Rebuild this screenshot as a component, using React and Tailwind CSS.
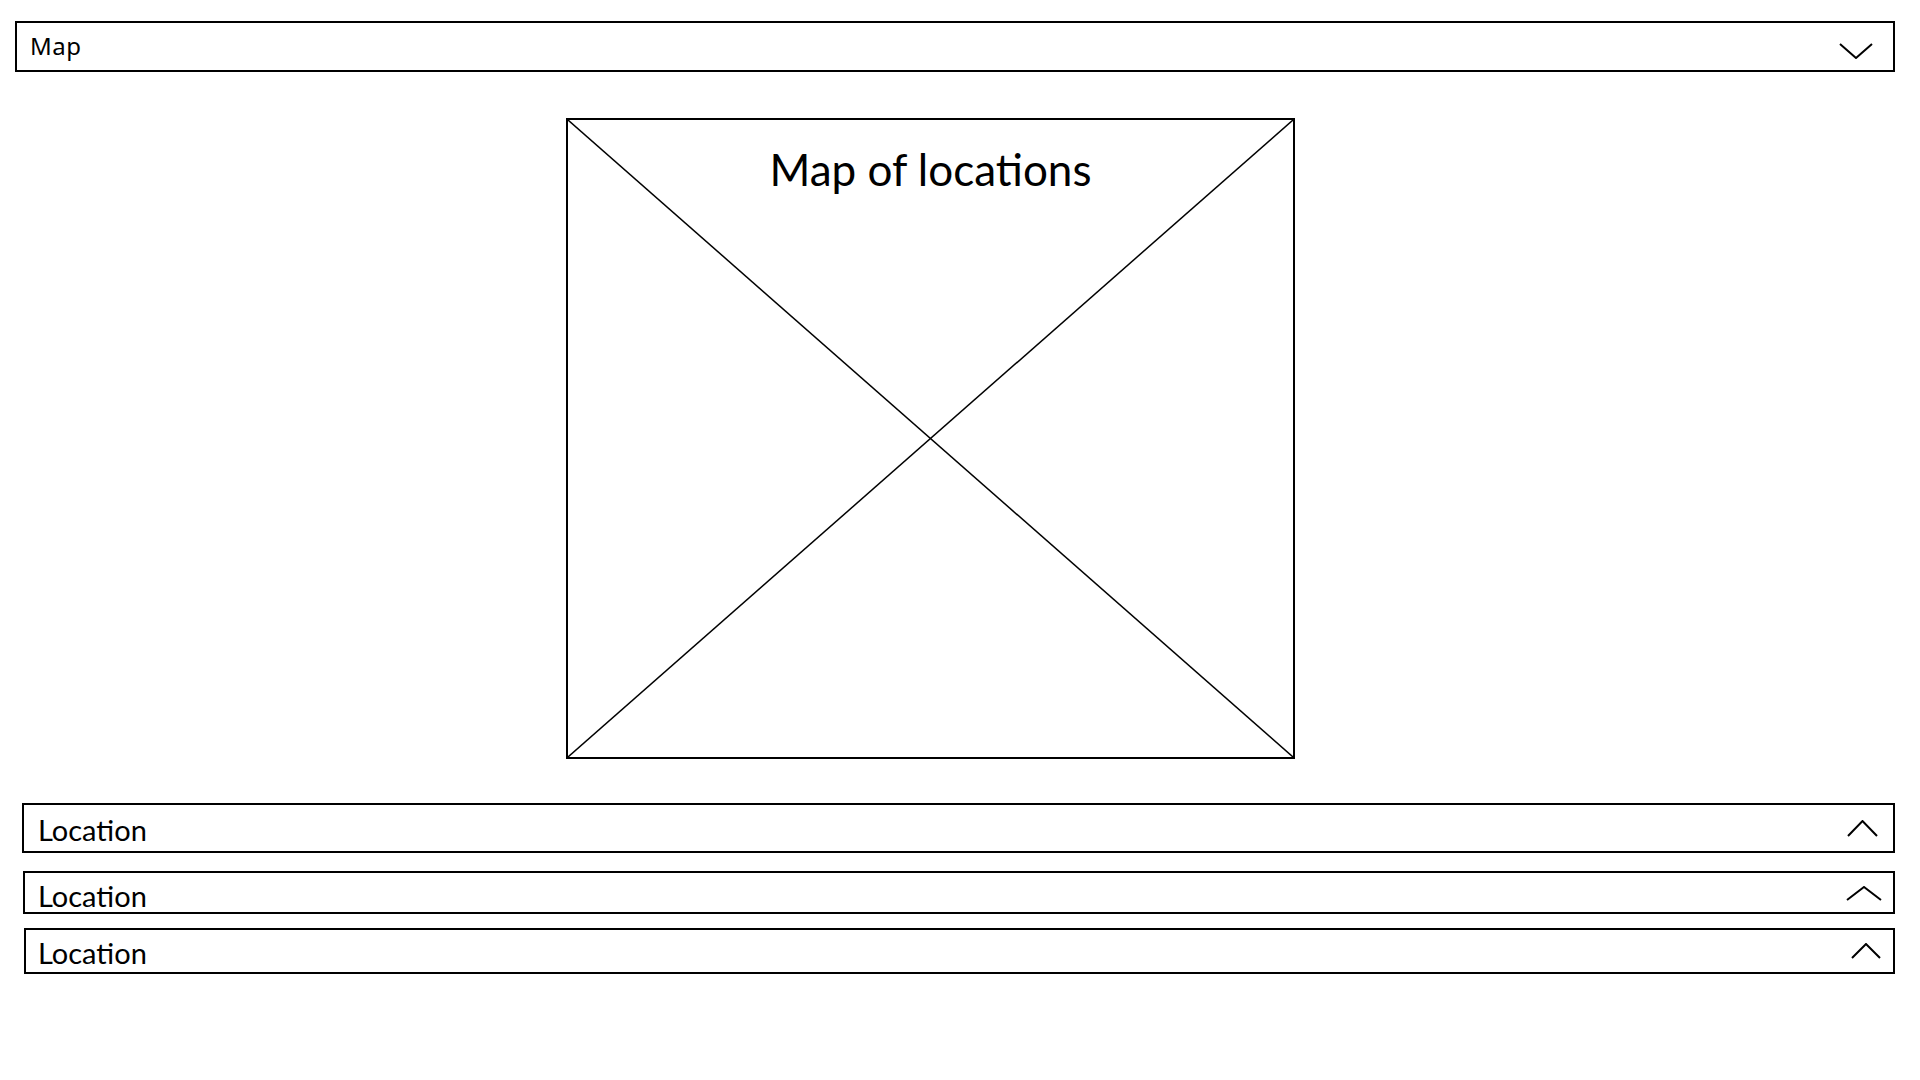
import React from 'react';

const Chevron = ({ up, w, h, className }) => (
    <svg width={w} height={h} viewBox={`0 0 ${w} ${h}`} className={className} fill="none">
        {up ? (
            <polyline points={`1,${h - 1} ${w / 2},1 ${w - 1},${h - 1}`} stroke="black" strokeWidth="2" />
        ) : (
            <polyline points={`1,1 ${w / 2},${h - 1} ${w - 1},1`} stroke="black" strokeWidth="2" />
        )}
    </svg>
);

const App = () => {
    return (
        <div className="w-[1920px] h-[1080px] bg-white text-black flex flex-col font-['Lato',sans-serif] overflow-hidden">
            {/* Map dropdown */}
            <div className="ml-[15px] mt-[21px] w-[1880px] h-[51px] border-2 border-black flex items-center justify-between pl-[13px] pr-[20px]">
                <span className="font-['Noto_Sans',sans-serif] text-[24px] tracking-[0.5px] leading-none mb-[2px]">Map</span>
                <Chevron w={34} h={16} className="mt-[8px]" />
            </div>

            {/* Map placeholder */}
            <div className="ml-[566px] mt-[46px] w-[729px] h-[641px] border-2 border-black relative flex justify-center">
                <svg className="absolute inset-0 w-full h-full" viewBox="0 0 725 637" preserveAspectRatio="none">
                    <line x1="0" y1="0" x2="725" y2="637" stroke="black" strokeWidth="1.5" />
                    <line x1="725" y1="0" x2="0" y2="637" stroke="black" strokeWidth="1.5" />
                </svg>
                <span className="relative mt-[27px] text-[44px] leading-none h-fit">Map of locations</span>
            </div>

            {/* Location rows */}
            <div className="ml-[22px] mt-[44px] w-[1873px] h-[50px] border-2 border-black flex items-center justify-between pl-[14px] pr-[15px]">
                <span className="text-[29px] leading-none pt-[3px]">Location</span>
                <Chevron up w={31} h={17} />
            </div>
            <div className="ml-[23px] mt-[18px] w-[1872px] h-[43px] border-2 border-black flex items-center justify-between pl-[13px] pr-[11px]">
                <span className="text-[29px] leading-none pt-[6px]">Location</span>
                <Chevron up w={36} h={15} className="mt-[1px]" />
            </div>
            <div className="ml-[24px] mt-[14px] w-[1871px] h-[46px] border-2 border-black flex items-center justify-between pl-[12px] pr-[12px]">
                <span className="text-[29px] leading-none pt-[2px]">Location</span>
                <Chevron up w={30} h={16} />
            </div>
        </div>
    );
};

export default App;
